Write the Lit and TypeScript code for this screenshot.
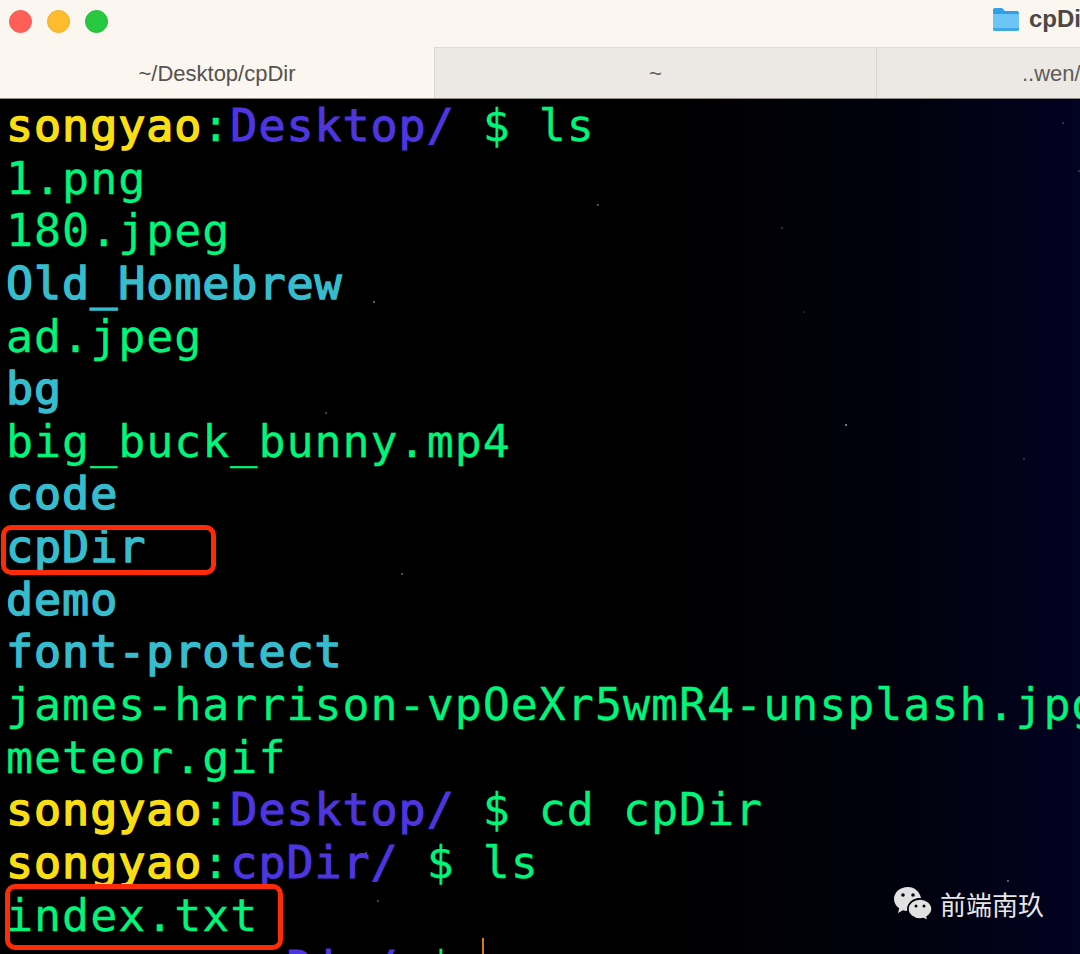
import { LitElement, html, css } from "lit";
import { customElement } from "lit/decorators.js";

type Seg = [string, string];
const Y = "y", B = "b", G = "g", C = "c";
const prompt = (dir: string, rest: string): Seg[] => [["songyao", Y], [":", G], [dir, B], [rest, G]];
const lines: Seg[][] = [
  prompt("Desktop/", " $ ls"),
  [["1.png", G]],
  [["180.jpeg", G]],
  [["Old_Homebrew", C]],
  [["ad.jpeg", G]],
  [["bg", C]],
  [["big_buck_bunny.mp4", G]],
  [["code", C]],
  [["cpDir", C]],
  [["demo", C]],
  [["font-protect", C]],
  [["james-harrison-vpOeXr5wmR4-unsplash.jpg", G]],
  [["meteor.gif", G]],
  prompt("Desktop/", " $ cd cpDir"),
  prompt("cpDir/", " $ ls"),
  [["index.txt", G]],
  prompt("cpDir/", " $ "),
];
const stars: [number, number, number][] = [
  [597, 204, 0.7], [373, 301, 0.8], [845, 424, 1], [325, 412, 0.6], [401, 573, 0.7],
  [1007, 880, 0.8], [377, 900, 0.6], [365, 852, 0.6], [781, 227, 0.4], [803, 311, 0.3],
  [1062, 122, 0.4], [1078, 170, 0.4], [1023, 458, 0.4],
];

@customElement("app-root")
export class AppRoot extends LitElement {
  static styles = css`
    :host { display: block; width: 1080px; height: 954px; overflow: hidden; font-family: "Liberation Sans", Arial, sans-serif; background: #000; }
    .title { height: 47px; background: #fbf6f0; display: flex; align-items: center; padding-left: 9px; gap: 15px; position: relative; }
    .dot { width: 23px; height: 23px; border-radius: 50%; box-sizing: border-box; margin-top: -5px; }
    .red { background: #ff5f57; border: 1px solid #ee5a52; }
    .yellow { background: #febc2e; border: 1px solid #eeae2a; }
    .green { background: #28c840; border: 1px solid #25b93b; }
    .name { position: absolute; left: 992px; top: 5px; display: flex; align-items: center; gap: 9px; font-size: 24px; font-weight: 700; color: #4a4745; white-space: nowrap; }
    .tabs { height: 52px; display: flex; background: #ece8e3; border-bottom: 1px solid #8f8b87; box-sizing: border-box; }
    .tab { flex: none; display: flex; align-items: center; justify-content: center; font-size: 22px; color: #5f5c5a; box-sizing: border-box; overflow: hidden; white-space: nowrap; border-right: 1px solid #d9d5d0; border-top: 1px solid #dedad5; padding-top: 2px; }
    .t1 { width: 435px; background: #fbf6f0; border-top: 0; color: #55524f; }
    .t2 { width: 442px; }
    .t3 { width: 203px; border-right: 0; justify-content: flex-start; padding-left: 145px; }
    .term { position: relative; height: 855px; overflow: hidden; padding: 1px 0 0 6px; box-sizing: border-box;
      background: linear-gradient(90deg, #000 0%, #000 60%, #01010e 85%, #020222 100%); }
    .line { height: 52.65px; line-height: 52.65px; font-family: "DejaVu Sans Mono", monospace; font-size: 45px; letter-spacing: 0.95px; white-space: pre; }
    .y { color: #fade14; -webkit-text-stroke: 1.5px #fade14; }
    .b { color: #4d36e0; -webkit-text-stroke: 1px #4d36e0; }
    .g { color: #00f57a; -webkit-text-stroke: 0.3px #00f57a; }
    .c { color: #36bccd; -webkit-text-stroke: 1.5px #36bccd; }
    .star { position: absolute; width: 2px; height: 2px; border-radius: 50%; background: #9a9ca6; }
    .box { position: absolute; border: 5px solid #ff2a06; border-radius: 10px; box-sizing: border-box; }
    .b1 { left: 1px; top: 426px; width: 215px; height: 50px; }
    .b2 { left: 5px; top: 785px; width: 278px; height: 66px; }
    .cursor { position: absolute; left: 482px; top: 839px; width: 2px; height: 16px; background: #d9781a; }
    .mark { position: absolute; left: 893px; top: 787px; display: flex; align-items: center; gap: 8px; color: #e6e6e6; font-size: 26px; font-family: "Noto Sans CJK SC", sans-serif; line-height: 36px; }
  `;

  render() {
    return html`
      <div class="title">
        <span class="dot red"></span><span class="dot yellow"></span><span class="dot green"></span>
        <div class="name">
          <svg width="28" height="26" viewBox="0 0 28 26">
            <path d="M1 4a2 2 0 0 1 2-2h7l3 3h12a2 2 0 0 1 2 2v3H1z" fill="#2f9fe6"/>
            <path d="M1 8h26v15a2 2 0 0 1-2 2H3a2 2 0 0 1-2-2z" fill="#6cc4f7"/>
            <path d="M1 22h26v1a2 2 0 0 1-2 2H3a2 2 0 0 1-2-2z" fill="#3fa6e8"/>
          </svg>
          <span>cpDir</span>
        </div>
      </div>
      <div class="tabs">
        <div class="tab t1">~/Desktop/cpDir</div>
        <div class="tab t2">~</div>
        <div class="tab t3">..wen/cpDir</div>
      </div>
      <div class="term">
        ${lines.map((l) => html`<div class="line">${l.map(([t, c]) => html`<span class=${c}>${t}</span>`)}</div>`)}
        ${stars.map(([x, y, o]) => html`<i class="star" style="left:${x}px;top:${y - 99}px;opacity:${o}"></i>`)}
        <div class="box b1"></div>
        <div class="box b2"></div>
        <div class="cursor"></div>
        <div class="mark">
          <svg width="39" height="36" viewBox="0 0 39 36">
            <path d="M15 1C7 1 1 6.500 1 13c0 3.800 2 7 5.200 9.300L5 27l5-2.800c1.400.4 2.700.6 4.200.7C13.400 17 20 11.500 28 12 26.800 5.800 21.500 1 15 1z" fill="#e2e2e2"/>
            <path d="M27 13c-6.500 0-12 4.400-12 10s5.500 10 12 10c1.300 0 2.500-.2 3.600-.5L35 35l-1-4.200c2.800-1.900 5-4.700 5-7.800 0-5.600-5.500-10-12-10z" fill="#e2e2e2" stroke="#05050f" stroke-width="1.500"/>
            <circle cx="10" cy="9" r="1.800" fill="#05050f"/><circle cx="20" cy="9" r="1.800" fill="#05050f"/>
            <circle cx="23" cy="20" r="1.500" fill="#05050f"/><circle cx="31" cy="20" r="1.500" fill="#05050f"/>
          </svg>
          <span>前端南玖</span>
        </div>
      </div>
    `;
  }
}
